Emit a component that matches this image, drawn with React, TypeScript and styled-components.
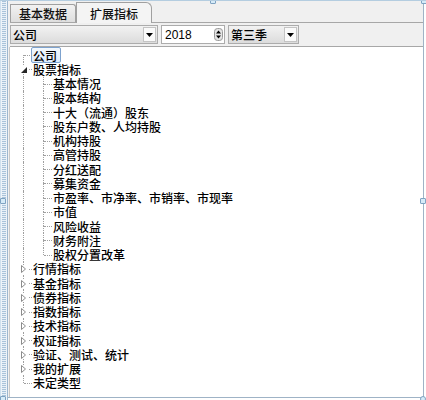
import React from 'react';
import styled, { createGlobalStyle } from 'styled-components';

const GlobalStyle = createGlobalStyle`
  html, body {
    margin: 0;
    padding: 0;
    background: #ffffff;
  }
  body {
    font-family: "Noto Sans CJK SC", "Liberation Sans", sans-serif;
    font-size: 12px;
    color: #000;
  }
`;

interface Node {
  label: string;
  children?: Node[];
  open?: boolean;
  selected?: boolean;
}

const tree: Node[] = [
  { label: '公司', selected: true },
  {
    label: '股票指标',
    open: true,
    children: [
      { label: '基本情况' },
      { label: '股本结构' },
      { label: '十大（流通）股东' },
      { label: '股东户数、人均持股' },
      { label: '机构持股' },
      { label: '高管持股' },
      { label: '分红送配' },
      { label: '募集资金' },
      { label: '市盈率、市净率、市销率、市现率' },
      { label: '市值' },
      { label: '风险收益' },
      { label: '财务附注' },
      { label: '股权分置改革' },
    ],
  },
  { label: '行情指标', children: [{ label: '' }] },
  { label: '基金指标', children: [{ label: '' }] },
  { label: '债券指标', children: [{ label: '' }] },
  { label: '指数指标', children: [{ label: '' }] },
  { label: '技术指标', children: [{ label: '' }] },
  { label: '权证指标', children: [{ label: '' }] },
  { label: '验证、测试、统计', children: [{ label: '' }] },
  { label: '我的扩展', children: [{ label: '' }] },
  { label: '未定类型' },
];

interface FlatRow {
  node: Node;
  guides: boolean[]; // does the ancestor column keep going below this row
  first: boolean;
  last: boolean;
  depth: number;
}

function flatten(nodes: Node[], guides: boolean[], depth: number, out: FlatRow[]) {
  nodes.forEach((n, i) => {
    const last = i === nodes.length - 1;
    out.push({ node: n, guides, first: depth === 0 && i === 0, last, depth });
    if (n.open && n.children) flatten(n.children, [...guides, !last], depth + 1, out);
  });
  return out;
}

const Frame = styled.div`
  position: relative;
  width: 426px;
  height: 400px;
  display: flex;
  box-sizing: border-box;
  overflow: hidden;
  border-top: 1px solid #b4cde0;
`;

const Rail = styled.div`
  width: 8px;
  flex: none;
  background:
    linear-gradient(90deg, #cfe0ee 0 1px, transparent 1px 7px, #9db7cf 7px 8px),
    repeating-linear-gradient(180deg, #a9c3da 0 1px, #e8f0f7 1px 2px);
  background-size: 8px 100%, 4px 100%;
  background-position: 0 0, 2px 0;
  background-repeat: no-repeat;
  background-color: #eef4f9;
`;

const Body = styled.div`
  flex: 1;
  display: flex;
  flex-direction: column;
  background: #f0f0f0;
  padding-left: 2px;
  border-right: 1px solid #9fb3c6;
  border-bottom: 1px solid #9fb3c6;
  margin-right: 2px;
  margin-bottom: 2px;
`;

const TabBar = styled.div`
  height: 21px;
  display: flex;
  align-items: flex-end;
  border-bottom: 1px solid #a7a7a7;
`;

const Tab = styled.div<{ $active?: boolean }>`
  height: ${p => (p.$active ? 21 : 18)}px;
  box-sizing: border-box;
  padding: 0 ${p => (p.$active ? 13 : 8)}px;
  display: flex;
  align-items: center;
  font-size: 12px;
  font-weight: 500;
  color: #111;
  border: 1px solid #a0a0a0;
  border-bottom: none;
  border-top-right-radius: ${p => (p.$active ? 6 : 3)}px;
  background: ${p => (p.$active ? '#f4f4f4' : 'linear-gradient(#f2f2f2, #dedede)')};
  margin-bottom: ${p => (p.$active ? -1 : 0)}px;
`;

const Toolbar = styled.div`
  height: 23px;
  display: flex;
  align-items: center;
  gap: 3px;
  border-bottom: 1px solid #a7a7a7;
`;

const Combo = styled.div<{ $w: number }>`
  width: ${p => p.$w}px;
  height: 19px;
  box-sizing: border-box;
  display: flex;
  align-items: center;
  border: 1px solid #acacac;
  background: linear-gradient(#f2f2f2, #dcdcdc);
  padding-left: 2px;
  font-size: 12px;
  font-weight: 500;
`;

const ComboText = styled.span`
  flex: 1;
`;

const DropButton = styled.div`
  width: 13px;
  height: 15px;
  margin-right: 1px;
  box-sizing: border-box;
  border: 1px solid #c4c4c4;
  background: #fafafa;
  display: flex;
  align-items: center;
  justify-content: center;
`;

const Spin = styled.div`
  width: 64px;
  height: 19px;
  box-sizing: border-box;
  display: flex;
  align-items: center;
  border: 1px solid #acacac;
  background: #fff;
  padding-left: 3px;
  font-family: "Liberation Sans", Arial, sans-serif;
  font-size: 12px;
`;

const SpinButtons = styled.div`
  width: 10px;
  height: 15px;
  margin-right: 1px;
  display: flex;
  align-items: center;
  justify-content: center;
`;

const TreePane = styled.div`
  flex: 1;
  background: #fff;
  padding: 1px 0 0 3px;
  border-left: 1px solid #c8c8c8;
  margin-left: -1px;
`;

const Row = styled.div`
  height: 14.25px;
  display: flex;
  align-items: stretch;
  white-space: nowrap;
`;

const Cell = styled.div`
  position: relative;
  width: 20px;
  flex: none;
`;

const VLine = styled.span<{ $part: 'full' | 'top' | 'bottom' }>`
  position: absolute;
  left: 10px;
  top: ${p => (p.$part === 'bottom' ? '50%' : '0')};
  height: ${p => (p.$part === 'full' ? '100%' : '50%')};
  border-left: 1px dotted #a0a0a0;
`;

const HLine = styled.span`
  position: absolute;
  left: 11px;
  right: 1px;
  top: 50%;
  border-top: 1px dotted #a0a0a0;
`;

const Expander = styled.span`
  position: absolute;
  left: 6px;
  top: 50%;
  margin-top: -4px;
  width: 9px;
  height: 9px;
  background: #fff;
  display: flex;
  align-items: center;
  justify-content: center;
`;

const Label = styled.span<{ $selected?: boolean }>`
  display: flex;
  align-items: center;
  padding: 0 3px 0 1px;
  margin-left: -2px;
  line-height: 13px;
  font-size: 12px;
  font-weight: 500;
  border: 1px solid ${p => (p.$selected ? '#7da2ce' : 'transparent')};
  border-radius: 2px;
  background: ${p => (p.$selected ? 'linear-gradient(#f2f8fd, #dcebfc)' : 'transparent')};
  margin-top: ${p => (p.$selected ? '-1px' : '0')};
  margin-bottom: ${p => (p.$selected ? '-1px' : '0')};
`;

const Handle = styled.span<{ $x: number; $y: number; $round?: boolean }>`
  position: absolute;
  left: ${p => p.$x}px;
  top: ${p => p.$y}px;
  width: 6px;
  height: 6px;
  box-sizing: border-box;
  border: 1px solid #7fa3c2;
  background: #d6ebf8;
  border-radius: ${p => (p.$round ? '50%' : '1px')};
`;

const DownArrow = () => (
  <svg width="7" height="4" viewBox="0 0 7 4">
    <path d="M0 0h7L3.5 4z" fill="#000" />
  </svg>
);

const SpinArrows = () => (
  <svg width="9" height="13" viewBox="0 0 9 13">
    <rect x="0.5" y="0.5" width="8" height="12" rx="3" fill="#e4e4e4" stroke="#9a9a9a" />
    <path d="M2 5.5h5L4.5 2.5z" fill="#000" />
    <path d="M2 7.5h5L4.5 10.5z" fill="#000" />
  </svg>
);

const ExpandedIcon = () => (
  <svg width="6" height="6" viewBox="0 0 6 6">
    <path d="M6 0v6H0z" fill="#262626" />
  </svg>
);

const CollapsedIcon = () => (
  <svg width="5" height="8" viewBox="0 0 5 8">
    <path d="M0.5 0.5L4.5 4L0.5 7.5z" fill="#fff" stroke="#8c8c8c" />
  </svg>
);

const TreeRow: React.FC<{ row: FlatRow }> = ({ row }) => {
  const { node, guides, first, last } = row;
  const hasKids = !!node.children;
  return (
    <Row>
      {guides.map((g, i) => (
        <Cell key={i}>{g && <VLine $part="full" />}</Cell>
      ))}
      <Cell>
        {!first && <VLine $part="top" />}
        {!last && <VLine $part="bottom" />}
        <HLine />
        {hasKids && (
          <Expander>{node.open ? <ExpandedIcon /> : <CollapsedIcon />}</Expander>
        )}
      </Cell>
      <Label $selected={node.selected}>{node.label}</Label>
    </Row>
  );
};

const App: React.FC = () => {
  const rows = flatten(tree, [], 0, []);
  return (
    <>
      <GlobalStyle />
      <Frame>
        <Rail />
        <Body>
          <TabBar>
            <Tab>基本数据</Tab>
            <Tab $active>扩展指标</Tab>
          </TabBar>
          <Toolbar>
            <Combo $w={148}>
              <ComboText>公司</ComboText>
              <DropButton>
                <DownArrow />
              </DropButton>
            </Combo>
            <Spin>
              <ComboText>2018</ComboText>
              <SpinButtons>
                <SpinArrows />
              </SpinButtons>
            </Spin>
            <Combo $w={71}>
              <ComboText>第三季</ComboText>
              <DropButton>
                <DownArrow />
              </DropButton>
            </Combo>
          </Toolbar>
          <TreePane>
            {rows.map((r, i) => (
              <TreeRow key={i} row={r} />
            ))}
          </TreePane>
        </Body>
        <Handle $x={210} $y={-3} />
        <Handle $x={421} $y={-3} />
        <Handle $x={0} $y={197} />
        <Handle $x={420} $y={197} />
        <Handle $x={0} $y={395} />
        <Handle $x={420} $y={395} $round />
      </Frame>
    </>
  );
};

export default App;
